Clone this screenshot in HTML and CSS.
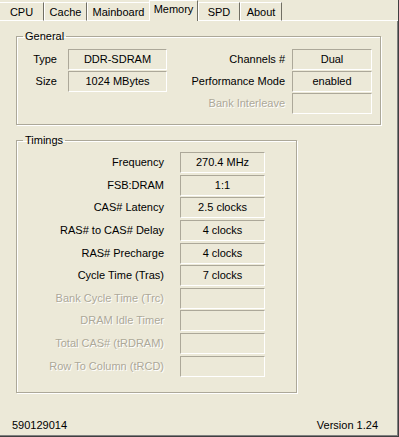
FILE: index.html
```html
<!DOCTYPE html>
<html lang="en">
<head>
    <meta charset="UTF-8">
    <meta name="viewport" content="width=device-width, initial-scale=1.0">
    <title>CPU-Z Memory</title>
    <link rel="stylesheet" href="styles.css">
</head>
<body>
    <div class="window">
        <!-- Tab strip -->
        <div class="tabs">
            <div class="tab tab-cpu">CPU</div>
            <div class="tab tab-cache">Cache</div>
            <div class="tab tab-mainboard">Mainboard</div>
            <div class="tab tab-memory active">Memory</div>
            <div class="tab tab-spd">SPD</div>
            <div class="tab tab-about">About</div>
        </div>

        <div class="panel">
            <fieldset class="group general">
                <legend>General</legend>
                <div class="general-grid">
                    <span class="label">Type</span>
                    <span class="field">DDR-SDRAM</span>
                    <span class="label">Channels #</span>
                    <span class="field">Dual</span>

                    <span class="label">Size</span>
                    <span class="field">1024 MBytes</span>
                    <span class="label">Performance Mode</span>
                    <span class="field">enabled</span>

                    <span></span>
                    <span></span>
                    <span class="label disabled">Bank Interleave</span>
                    <span class="field"></span>
                </div>
            </fieldset>

            <fieldset class="group timings">
                <legend>Timings</legend>
                <div class="timings-grid">
                    <span class="label">Frequency</span>
                    <span class="field">270.4 MHz</span>
                    <span class="label">FSB:DRAM</span>
                    <span class="field">1:1</span>
                    <span class="label">CAS# Latency</span>
                    <span class="field">2.5 clocks</span>
                    <span class="label">RAS# to CAS# Delay</span>
                    <span class="field">4 clocks</span>
                    <span class="label">RAS# Precharge</span>
                    <span class="field">4 clocks</span>
                    <span class="label">Cycle Time (Tras)</span>
                    <span class="field">7 clocks</span>
                    <span class="label disabled">Bank Cycle Time (Trc)</span>
                    <span class="field"></span>
                    <span class="label disabled">DRAM Idle Timer</span>
                    <span class="field"></span>
                    <span class="label disabled">Total CAS# (tRDRAM)</span>
                    <span class="field"></span>
                    <span class="label disabled">Row To Column (tRCD)</span>
                    <span class="field"></span>
                </div>
            </fieldset>

            <div class="status">
                <span>590129014</span>
                <span>Version 1.24</span>
            </div>
        </div>
    </div>
</body>
</html>
```

FILE: styles.css
```css
body {
    margin: 0;
    padding: 0;
    background-color: #ece9d8;
    font-family: 'Liberation Sans', Arial, sans-serif;
    font-size: 11px;
    color: #000;
}

.window {
    width: 399px;
    height: 437px;
    box-sizing: border-box;
    display: flex;
    flex-direction: column;
    background-color: #ece9d8;
    border-right: 1px solid #404040;
    border-bottom: 1px solid #404040;
}

/* Tabs */
.tabs {
    display: flex;
    align-items: flex-end;
    height: 21px;
    flex-shrink: 0;
}

.tab {
    box-sizing: border-box;
    height: 19px;
    line-height: 19px;
    text-align: center;
    border-left: 1px solid #fff;
    border-top: 1px solid #fff;
    border-right: 1px solid #716f64;
    border-bottom: 1px solid #fff;
}

.tab-cpu { width: 44px; border-left: none; }
.tab-cache { width: 43px; }
.tab-mainboard { width: 63px; }
.tab-spd { width: 42px; }
.tab-about { width: 42px; }

.tab.active {
    width: 49px;
    height: 21px;
    line-height: 17px;
    padding-bottom: 2px;
    border-bottom: none;
    margin-left: -1px;
}

.tabs::after {
    content: "";
    flex: 1;
    height: 19px;
    box-sizing: border-box;
    border-bottom: 1px solid #fff;
}

/* Panel */
.panel {
    flex: 1;
    display: flex;
    flex-direction: column;
    padding-left: 16px;
    border-right: 1px solid #808080;
    border-bottom: 1px solid #808080;
}

.group {
    margin: 0;
    padding: 0;
    border: 1px solid #aca899;
    box-shadow: inset 1px 1px 0 #fff, 1px 1px 0 #fff;
}

.group legend {
    margin-left: 6px;
    padding: 0 2px;
    line-height: 13px;
}

.general {
    width: 365px;
    box-sizing: border-box;
    height: 95px;
    margin-top: 9px;
}

.timings {
    width: 281px;
    box-sizing: border-box;
    height: 259px;
    margin-top: 9px;
}

.label {
    text-align: right;
    line-height: 21px;
    white-space: nowrap;
}

.label.disabled {
    color: #aca899;
    text-shadow: 1px 1px 0 #fff;
}

.field {
    box-sizing: border-box;
    height: 21px;
    line-height: 19px;
    text-align: center;
    border-top: 1px solid #aca899;
    border-left: 1px solid #aca899;
    border-right: 1px solid #fff;
    border-bottom: 1px solid #fff;
}

.general-grid {
    display: grid;
    grid-template-columns: 51px 99px 125px 80px;
    grid-auto-rows: 21px;
    row-gap: 1px;
    margin-top: 6px;
}

.general-grid .label {
    padding-right: 11px;
}

.general-grid .label:nth-child(4n+3) {
    padding-right: 7px;
}

.timings-grid {
    display: grid;
    grid-template-columns: 163px 85px;
    grid-auto-rows: 21px;
    row-gap: 1.65px;
    margin-top: 5px;
}

.timings-grid .label {
    padding-right: 16px;
}

.status {
    margin-top: auto;
    margin-left: -4px;
    display: flex;
    justify-content: space-between;
    padding: 0 19px 3px 0;
    line-height: 13px;
}
```
